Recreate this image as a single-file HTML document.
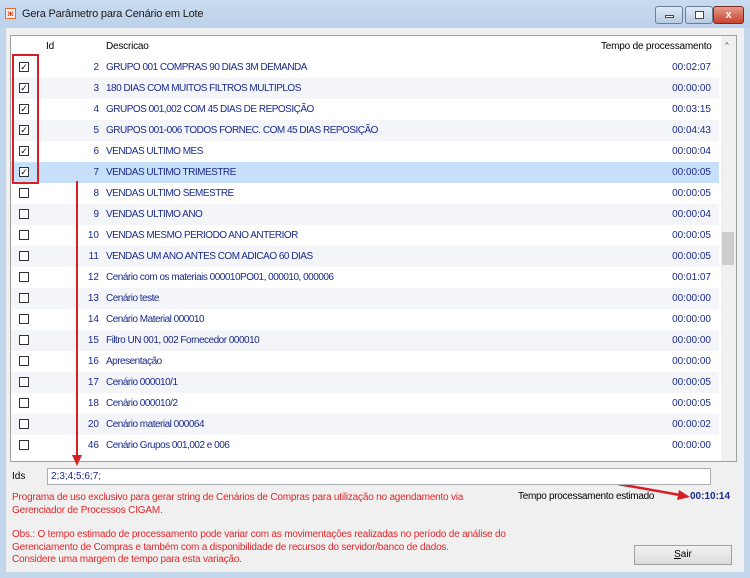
<!DOCTYPE html>
<html><head><meta charset="utf-8"><style>
*{margin:0;padding:0;box-sizing:border-box}
body{width:750px;height:578px;overflow:hidden;background:#c2d6ec;font-family:"Liberation Sans",sans-serif;font-size:10px;position:relative;color:#000}
.title{position:absolute;left:0;top:0;width:750px;height:28px;background:linear-gradient(#c9dbef,#bcd2ea)}
.title span{position:absolute;left:22px;top:8px;font-size:11px;color:#1a1a1a;letter-spacing:-0.2px}
.ico{position:absolute;left:5px;top:8px;width:11px;height:11px;background:#f0f0f0;border:1px solid #e07030;color:#d04010;font-size:8px;line-height:9px;text-align:center;font-weight:bold}
.btn{position:absolute;top:6px;height:18px;border:1px solid #6c7f99;border-radius:3px;background:linear-gradient(#e0eaf6,#b8cbe3)}
.client{position:absolute;left:6px;top:28px;width:738px;height:544px;background:#f0f0f0}
.grid{position:absolute;left:10px;top:35px;width:727px;height:427px;background:#fff;border:1px solid #a0a0a0;overflow:hidden}
.hdr{position:absolute;left:0;top:0;width:710px;height:21px;background:#fff;font-size:10px}
.hdr div{position:absolute;top:5px;letter-spacing:-0.2px}
.row{position:absolute;left:0;width:708px;height:21px;font-size:10px;color:#1a2a8a}
.row.g{background:#f4f5f9}.row.s{background:#c6e0fa}
.cb{position:absolute;left:8px;top:5px;width:10px;height:10px;border:1px solid #333;background:#fff;font-size:9px;line-height:8px;text-align:center;color:#000}
.id{position:absolute;right:620px;top:5px;text-align:right}
.ds{position:absolute;left:95px;top:5px;letter-spacing:-0.5px}
.tm{position:absolute;right:8px;top:5px}
.sb{position:absolute;left:710px;top:0;width:15px;height:425px;background:#f0f0f0}
.thumb{position:absolute;left:711px;top:196px;width:12px;height:33px;background:#cdcdcd}
.red{color:#e0262a;font-size:10px;position:absolute;line-height:12.5px;letter-spacing:-0.2px}
</style></head><body>
<div class="title"><div class="ico">ж</div><span>Gera Parâmetro para Cenário em Lote</span>
<div class="btn" style="left:655px;width:28px"><div style="position:absolute;left:9px;top:8px;width:9px;height:3px;background:#fff;border:1px solid #445"></div></div>
<div class="btn" style="left:685px;width:28px"><div style="position:absolute;left:9px;top:4px;width:9px;height:8px;background:#fff;border:1px solid #445"></div></div>
<div class="btn" style="left:713px;width:31px;background:linear-gradient(#e89a8a,#c7422e);border-color:#7a2a1e;color:#fff;text-align:center;font-weight:bold;font-size:11px;line-height:16px">x</div>
</div>
<div class="client"></div>
<div class="grid">
<div class="hdr"><div style="left:35px">Id</div><div style="left:95px">Descricao</div><div style="left:590px">Tempo de processamento</div></div>
<div class="sb"></div><div style="position:absolute;left:714px;top:5px;font-size:8px;color:#555">^</div>
<div class="thumb"></div>
<div id="rows"></div>
</div>
<div style="position:absolute;left:12px;top:54px;width:27px;height:130px;border:2px solid #d71f26"></div>
<div style="position:absolute;left:76px;top:181px;width:2px;height:278px;background:#d71f26"></div>
<div style="position:absolute;left:72px;top:455px;width:0;height:0;border-left:5px solid transparent;border-right:5px solid transparent;border-top:11px solid #d71f26"></div>
<svg style="position:absolute;left:610px;top:475px" width="85" height="30"><line x1="8" y1="9" x2="70" y2="20" stroke="#d71f26" stroke-width="2.5"/><polygon points="80,22 67,25 69,15" fill="#d71f26"/></svg>
<div style="position:absolute;left:12px;top:471px;font-size:10px">Ids</div>
<div style="position:absolute;left:47px;top:468px;width:664px;height:17px;background:#fff;border:1px solid #abadb3;font-size:10px;color:#1a2a8a;padding:2px 3px">2;3;4;5;6;7;</div>
<div class="red" style="left:12px;top:492px">Programa de uso exclusivo para gerar string de Cenários de Compras para utilização no agendamento via<br>Gerenciador de Processos CIGAM.</div>
<div class="red" style="left:12px;top:529px">Obs.: O tempo estimado de processamento pode variar com as movimentações realizadas no período de análise do<br>Gerenciamento de Compras e também com a disponibilidade de recursos do servidor/banco de dados.<br>Considere uma margem de tempo para esta variação.</div>
<div style="position:absolute;left:518px;top:491px;font-size:10px;letter-spacing:-0.3px">Tempo processamento estimado</div>
<div style="position:absolute;left:690px;top:491px;font-size:10px;font-weight:bold;color:#1a2a8a">00:10:14</div>
<div style="position:absolute;left:634px;top:545px;width:98px;height:20px;border:1px solid #a0a0a0;background:linear-gradient(#f2f2f2,#dcdcdc);text-align:center;font-size:10px;line-height:18px"><u>S</u>air</div>
<script>
var d=[[1,2,"GRUPO 001 COMPRAS 90 DIAS 3M DEMANDA","00:02:07"],[1,3,"180 DIAS COM MUITOS FILTROS MULTIPLOS","00:00:00"],[1,4,"GRUPOS 001,002 COM 45 DIAS DE REPOSIÇÃO","00:03:15"],[1,5,"GRUPOS 001-006 TODOS FORNEC. COM 45 DIAS REPOSIÇÃO","00:04:43"],[1,6,"VENDAS ULTIMO MES","00:00:04"],[1,7,"VENDAS ULTIMO TRIMESTRE","00:00:05"],[0,8,"VENDAS ULTIMO SEMESTRE","00:00:05"],[0,9,"VENDAS ULTIMO ANO","00:00:04"],[0,10,"VENDAS MESMO PERIODO ANO ANTERIOR","00:00:05"],[0,11,"VENDAS UM ANO ANTES COM ADICAO 60 DIAS","00:00:05"],[0,12,"Cenário com os materiais 000010PO01, 000010, 000006","00:01:07"],[0,13,"Cenário teste","00:00:00"],[0,14,"Cenário Material 000010","00:00:00"],[0,15,"Filtro UN 001, 002 Fornecedor 000010","00:00:00"],[0,16,"Apresentação","00:00:00"],[0,17,"Cenário 000010/1","00:00:05"],[0,18,"Cenário 000010/2","00:00:05"],[0,20,"Cenário material 000064","00:00:02"],[0,46,"Cenário Grupos 001,002 e 006","00:00:00"]];
var h="";d.forEach(function(r,i){var c=i==5?"s":(i%2?"g":"");h+='<div class="row '+c+'" style="top:'+(21+i*21)+'px"><div class="cb">'+(r[0]?"✓":"")+'</div><div class="id">'+r[1]+'</div><div class="ds">'+r[2]+'</div><div class="tm">'+r[3]+'</div></div>';});
document.getElementById("rows").innerHTML=h;
</script>
</body></html>
